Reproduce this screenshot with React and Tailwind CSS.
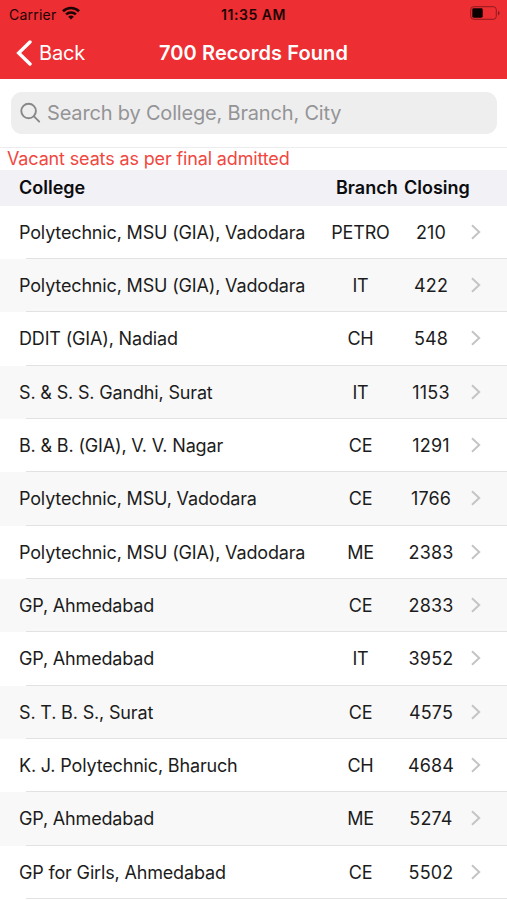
const RECORDS = [
  { college: 'Polytechnic, MSU (GIA), Vadodara', branch: 'PETRO', closing: 210 },
  { college: 'Polytechnic, MSU (GIA), Vadodara', branch: 'IT', closing: 422 },
  { college: 'DDIT (GIA), Nadiad', branch: 'CH', closing: 548 },
  { college: 'S. & S. S. Gandhi, Surat', branch: 'IT', closing: 1153 },
  { college: 'B. & B. (GIA), V. V. Nagar', branch: 'CE', closing: 1291 },
  { college: 'Polytechnic, MSU, Vadodara', branch: 'CE', closing: 1766 },
  { college: 'Polytechnic, MSU (GIA), Vadodara', branch: 'ME', closing: 2383 },
  { college: 'GP, Ahmedabad', branch: 'CE', closing: 2833 },
  { college: 'GP, Ahmedabad', branch: 'IT', closing: 3952 },
  { college: 'S. T. B. S., Surat', branch: 'CE', closing: 4575 },
  { college: 'K. J. Polytechnic, Bharuch', branch: 'CH', closing: 4684 },
  { college: 'GP, Ahmedabad', branch: 'ME', closing: 5274 },
  { college: 'GP for Girls, Ahmedabad', branch: 'CE', closing: 5502 },
];

function WifiIcon() {
  return (
    <svg className="-mt-[2px]" width="18" height="14" viewBox="0 0 18 14" fill="none" stroke="#1c0405" strokeWidth="2.6">
      <path d="M1 5.2a11.6 11.6 0 0 1 16 0" />
      <path d="M4.1 8.4a7.1 7.1 0 0 1 9.8 0" />
      <path d="M9 13.6 6.2 10.7a4.1 4.1 0 0 1 5.6 0z" fill="#1c0405" stroke="none" />
    </svg>
  );
}

function BatteryIcon() {
  return (
    <svg className="-mt-[2px]" width="31" height="14" viewBox="0 0 31 14" fill="none">
      <rect x="0.7" y="0.7" width="25.6" height="12.6" rx="3" stroke="#8f1a1e" />
      <rect x="2.3" y="2.3" width="10.4" height="9.4" rx="1.4" fill="#0c0101" />
      <path d="M28 5v4.4c1-.4 1.6-1.2 1.6-2.2S29 5.4 28 5z" fill="#8f1a1e" />
    </svg>
  );
}

function Row({ college, branch, closing, striped }) {
  return (
    <li
      className={[
        'relative flex h-[53.35px] items-center pl-[19px] text-[18px] text-[#1c1c1c]',
        striped ? 'bg-[#f8f8f8]' : 'bg-white',
      ].join(' ')}
    >
      <span className="w-[301px] whitespace-nowrap tracking-[-0.009em]">{college}</span>
      <span className="w-[81px] text-center tracking-[-0.01em]">{branch}</span>
      <span className="w-[60px] text-center tracking-[0.008em]">{closing}</span>
      <svg className="-mt-px ml-[9px]" width="12" height="18" viewBox="0 0 12 18" fill="none" stroke="#c4c4c6" strokeWidth="2">
        <path d="M2 2.2 9.2 9 2 15.8" />
      </svg>
      <div className="absolute right-0 bottom-0 left-[26px] h-px bg-[#e2e2e3]" />
    </li>
  );
}

export default function App() {
  return (
    <div className="h-[900px] overflow-hidden bg-white font-['Inter',sans-serif]">
      <header className="h-[79px] bg-[#ed2e33]">
        <div className="grid h-7 grid-cols-[1fr_auto_1fr] items-center pr-[6px] pl-[9px] text-[14px] text-[#1c0405]">
          <div className="flex items-center gap-[6px]">
            <span className="tracking-[0.015em]">Carrier</span>
            <WifiIcon />
          </div>
          <span className="mr-[3px] font-semibold tracking-[0.04em] whitespace-nowrap">11:35 AM</span>
          <div className="flex justify-end">
            <BatteryIcon />
          </div>
        </div>
        <div className="grid h-[49px] grid-cols-[1fr_auto_1fr] items-center px-4 text-white">
          <button className="flex items-center gap-[7px] text-[20px] tracking-[-0.01em]">
            <svg width="16" height="26" viewBox="0 0 16 26" fill="none" stroke="currentColor" strokeWidth="3.4" strokeLinecap="round">
              <path d="M14 2 2.7 13 14 24" />
            </svg>
            Back
          </button>
          <h1 className="text-[20px] font-semibold tracking-[0.005em]">700 Records Found</h1>
        </div>
      </header>

      <div className="h-[69px] border-b border-[#ececee] px-[11px] pt-[13px]">
        <div className="-mr-px flex h-[42px] items-center gap-[5px] rounded-[11px] bg-[#eeeeef] pl-[9px] text-[20px] text-[#949496]">
          <svg width="22" height="22" viewBox="0 0 22 22" fill="none" stroke="#88888b" strokeWidth="1.9" strokeLinecap="round">
            <circle cx="8.6" cy="9" r="7.3" />
            <path d="m14 14.4 5.2 5.2" />
          </svg>
          <span className="tracking-[-0.009em]">Search by College, Branch, City</span>
        </div>
      </div>

      <p className="h-[22px] pl-[7px] text-[18px] leading-[22px] tracking-[-0.008em] text-[#f0473f]">
        Vacant seats as per final admitted
      </p>

      <div className="flex h-[35.5px] items-center bg-[#f1f1f6] pb-px pl-[19px] text-[18px] font-semibold text-[#0c0c0e]">
        <span className="w-[317px]">College</span>
        <span className="w-[68px]">Branch</span>
        <span>Closing</span>
      </div>

      <ul>
        {RECORDS.map((record, i) => (
          <Row key={i} {...record} striped={i % 2 === 1} />
        ))}
      </ul>
    </div>
  );
}
